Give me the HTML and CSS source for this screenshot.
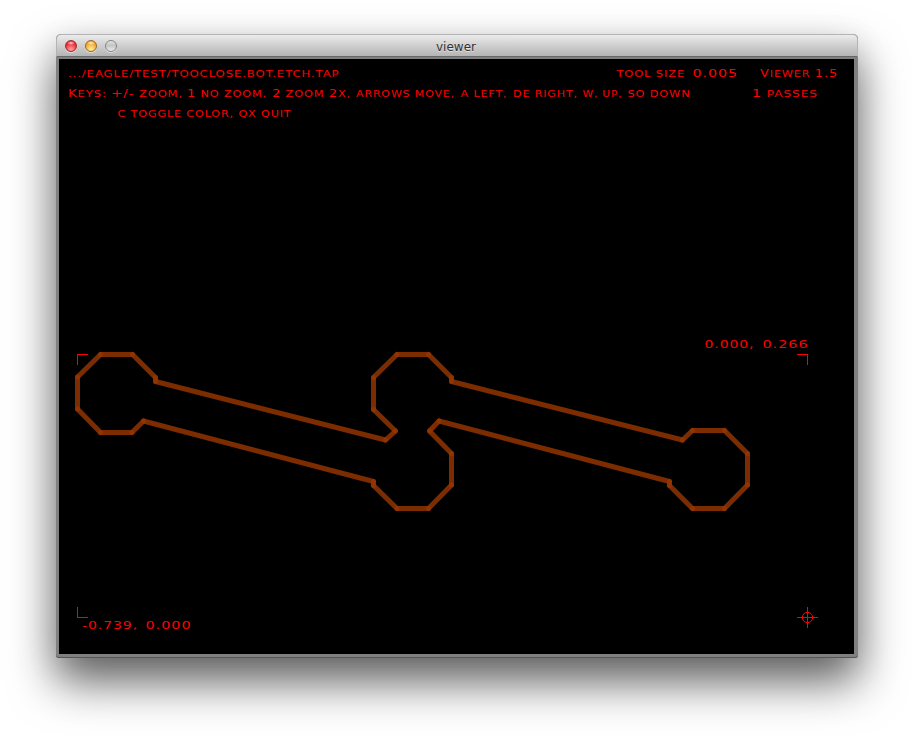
FILE: index.html
```html
<!DOCTYPE html>
<html lang="en">
<head>
<meta charset="utf-8">
<title>viewer</title>
<link rel="stylesheet" href="styles.css">
</head>
<body>
<main class="window">
  <header class="titlebar">
    <div class="lights"><i class="light red"></i><i class="light amber"></i><i class="light idle"></i></div>
    <h1 class="title">viewer</h1>
  </header>
  <svg class="canvas" viewBox="59 59 795 595" width="795" height="595">
    <g class="trace">
      <path d="M77.5 377V409"/><path d="M77.5 409L100.500 432.500"/><path d="M100.500 432.500H132"/><path d="M132 432.500L143.500 421"/><path d="M143.500 421L373.500 481.500"/><path d="M373.500 481.500V485.500"/><path d="M373.500 485.500L397 508.500"/><path d="M397 508.500H428.500"/><path d="M428.500 508.500L451.500 485"/><path d="M451.500 485V453.500"/><path d="M451.500 453.500L429.500 431"/><path d="M429.500 431L439 421"/><path d="M439 421L669.500 481.500"/><path d="M669.500 481.500V485.500"/><path d="M669.500 485.500L692.500 508.500"/><path d="M692.500 508.500H724.500"/><path d="M724.500 508.500L747.500 485"/><path d="M747.500 485V453.500"/><path d="M747.500 453.500L724.500 430.500"/><path d="M724.500 430.500H692.500"/><path d="M692.500 430.500L682.500 440"/><path d="M682.500 440L451.500 381.500"/><path d="M451.500 381.500V377.500"/><path d="M451.500 377.500L428.500 354.500"/><path d="M428.500 354.500H397"/><path d="M397 354.500L373.500 377.500"/><path d="M373.500 377.500V409.500"/><path d="M373.500 409.500L395.500 431"/><path d="M395.500 431L385.500 440"/><path d="M385.500 440L155.500 381.500"/><path d="M155.500 381.500V377.500"/><path d="M155.500 377.500L132.500 354.500"/><path d="M132.500 354.500H100.500"/><path d="M100.500 354.500L77.500 377"/>
    </g>
    <g class="marks">
      <path d="M77.500 365V354.500H88M797 354.500H807.500V365M77.500 607V617.500H88M797 617.500H818M807.500 607V628"/>
      <circle cx="807.500" cy="617.500" r="5.200"/>
    </g>
    <g class="text">
      <text x="68" y="77" textLength="271.500" lengthAdjust="spacingAndGlyphs">.../EAGLE/TEST/TOOCLOSE.BOT.ETCH.TAP</text>
      <text x="616.500" y="77" textLength="68.500" lengthAdjust="spacingAndGlyphs">TOOL SIZE</text>
      <text x="692.500" y="77" textLength="45.500" lengthAdjust="spacingAndGlyphs" class="big">0.005</text>
      <text x="760" y="77" textLength="78" lengthAdjust="spacingAndGlyphs"><tspan class="big">V</tspan>IEWER <tspan class="big">1.5</tspan></text>
      <text x="68" y="97" textLength="115" lengthAdjust="spacingAndGlyphs"><tspan class="big">K</tspan>EYS: <tspan class="big">+/-</tspan> ZOOM,</text>
      <text x="187" y="97" textLength="80" lengthAdjust="spacingAndGlyphs"><tspan class="big">1</tspan> NO ZOOM,</text>
      <text x="272" y="97" textLength="79" lengthAdjust="spacingAndGlyphs"><tspan class="big">2</tspan> ZOOM <tspan class="big">2</tspan>X,</text>
      <text x="356" y="97" textLength="99" lengthAdjust="spacingAndGlyphs">ARROWS MOVE,</text>
      <text x="460.500" y="97" textLength="47" lengthAdjust="spacingAndGlyphs">A LEFT,</text>
      <text x="513" y="97" textLength="65" lengthAdjust="spacingAndGlyphs">DE RIGHT,</text>
      <text x="582.500" y="97" textLength="40" lengthAdjust="spacingAndGlyphs">W, UP,</text>
      <text x="627.500" y="97" textLength="63" lengthAdjust="spacingAndGlyphs">SO DOWN</text>
      <text x="752" y="97" textLength="66" lengthAdjust="spacingAndGlyphs"><tspan class="big">1</tspan> PASSES</text>
      <text x="117.500" y="117" textLength="174" lengthAdjust="spacingAndGlyphs">C TOGGLE COLOR, QX QUIT</text>
      <text x="704.500" y="348" textLength="50" lengthAdjust="spacingAndGlyphs" class="big">0.000,</text>
      <text x="762.500" y="348" textLength="46" lengthAdjust="spacingAndGlyphs" class="big">0.266</text>
      <text x="82" y="629" textLength="56" lengthAdjust="spacingAndGlyphs" class="big">-0.739,</text>
      <text x="145.500" y="629" textLength="46" lengthAdjust="spacingAndGlyphs" class="big">0.000</text>
    </g>
  </svg>
</main>
</body>
</html>
```
FILE: styles.css
```css
* { box-sizing: border-box; }
html, body { margin: 0; height: 100%; background: #fff; overflow: hidden; }
body { padding: 34px 56px 0; }
.window {
  width: 802px;
  height: 624px;
  background: #808080;
  border-radius: 5px 5px 3px 3px;
  box-shadow: 0 24px 46px rgba(0,0,0,.6), 0 8px 32px rgba(0,0,0,.1), inset 0 -1px 0 #555;
}
.titlebar {
  position: relative;
  display: flex;
  align-items: center;
  justify-content: center;
  height: 23px;
  border: 1px solid #b4b4b4;
  border-bottom-color: #686868;
  border-radius: 5px 5px 0 0;
  background: linear-gradient(#ececec, #d4d4d4 40%, #b5b5b5);
}
.title {
  margin: 3px 2px 0 0;
  font: 12px "DejaVu Sans", sans-serif;
  color: #333;
  text-shadow: 0 1px 0 rgba(255,255,255,.5);
}
.lights { position: absolute; left: 8px; top: 5px; display: flex; gap: 8px; }
.light { width: 12px; height: 12px; border-radius: 50%; border: 1px solid; box-shadow: 0 1px 0 rgba(255,255,255,.5); }
.red { border-color: #a02c30; background: radial-gradient(ellipse 4px 2px at 50% 20%, #fffc, transparent), radial-gradient(circle at 50% 85%, #ffa4a4, #e8212c 70%); }
.amber { border-color: #9c681c; background: radial-gradient(ellipse 4px 2px at 50% 20%, #fffc, transparent), radial-gradient(circle at 50% 85%, #fff29c, #efa027 70%); }
.idle { border-color: #858585; background: linear-gradient(#e2e2e2, #c4c4c4 45%, #ececec); }
.canvas { display: block; margin: 2px 0 0 3px; background: #000; }
.trace { fill: none; stroke: #993600; stroke-opacity: .82; stroke-width: 5; stroke-linecap: round; }
.marks { fill: none; stroke: #f00; stroke-width: 1; }
.marks path { shape-rendering: crispEdges; }
.text { fill: #f00; font-family: "DejaVu Sans", sans-serif; font-size: 9.2px; letter-spacing: .7px; }
.text text { white-space: pre; }
.big { font-size: 10.600px; }
```
